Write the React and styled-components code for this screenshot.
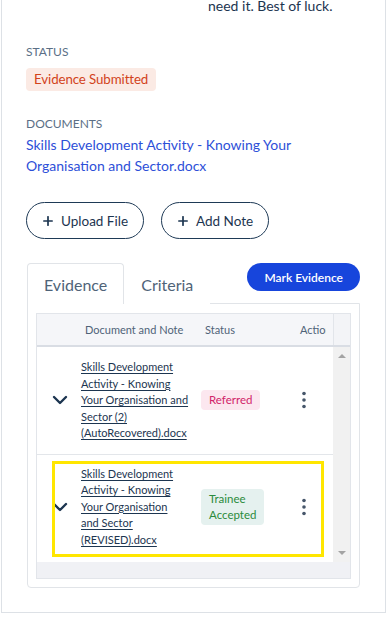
import styled, { createGlobalStyle } from "styled-components";

const GlobalStyle = createGlobalStyle`
  html, body {
    margin: 0;
    padding: 0;
    background: #ffffff;
    overflow: hidden;
  }
  body {
    font-family: Lato, "Noto Sans", sans-serif;
    color: #1c3550;
  }
`;

function Chevron() {
  return (
    <svg width="16" height="10" viewBox="0 0 16 10">
      <polyline
        points="2,2 8,8 14,2"
        fill="none"
        stroke="#1c3550"
        strokeWidth="2.4"
        strokeLinecap="round"
        strokeLinejoin="round"
      />
    </svg>
  );
}

function Plus() {
  return (
    <svg width="10" height="10" viewBox="0 0 10 10">
      <path d="M5 0.8v8.4M0.8 5h8.4" stroke="#1c3550" strokeWidth="1.7" strokeLinecap="round" />
    </svg>
  );
}

function Kebab() {
  return (
    <svg width="6" height="18" viewBox="0 0 6 18">
      <circle cx="3" cy="2.5" r="1.8" fill="#46566a" />
      <circle cx="3" cy="9" r="1.8" fill="#46566a" />
      <circle cx="3" cy="15.5" r="1.8" fill="#46566a" />
    </svg>
  );
}

const rows = [
  {
    id: 1,
    lines: ["Skills Development", "Activity - Knowing", "Your Organisation and", "Sector (2)", "(AutoRecovered).docx"],
    status: "Referred",
    tone: "referred",
  },
  {
    id: 2,
    lines: ["Skills Development", "Activity - Knowing", "Your Organisation", "and Sector", "(REVISED).docx"],
    status: "Trainee Accepted",
    tone: "accepted",
    highlight: true,
  },
];

export default function App() {
  return (
    <>
      <GlobalStyle />
      <Page>
        <Intro>need it. Best of luck.</Intro>

        <Label $gap={28}>Status</Label>
        <StatusBadge>Evidence Submitted</StatusBadge>

        <Label $gap={25}>Documents</Label>
        <DocLink>Skills Development Activity - Knowing Your Organisation and Sector.docx</DocLink>

        <Actions>
          <OutlineButton>
            <Plus />
            Upload File
          </OutlineButton>
          <OutlineButton>
            <Plus />
            Add Note
          </OutlineButton>
        </Actions>

        <TabBar>
          <Tab $active>Evidence</Tab>
          <Tab>Criteria</Tab>
          <MarkButton>Mark Evidence</MarkButton>
        </TabBar>

        <Panel>
          <Table>
            <HeadRow>
              <Clip>
                <Columns>
                  <HeadCell />
                  <HeadCell>Document and Note</HeadCell>
                  <HeadCell>Status</HeadCell>
                  <HeadCell $clip>Action</HeadCell>
                </Columns>
              </Clip>
              <Gutter />
            </HeadRow>

            <BodyRow>
              <Clip>
                {rows.map((row) => (
                  <Row key={row.id}>
                    <Columns>
                      <ExpandCell>
                        <Chevron />
                      </ExpandCell>
                      <DocCell>
                        <DocName href="#">
                          {row.lines.map((line, i) => (
                            <DocLine key={i}>{line}</DocLine>
                          ))}
                        </DocName>
                      </DocCell>
                      <StatusCell>
                        <RowBadge $tone={row.tone}>{row.status}</RowBadge>
                      </StatusCell>
                      <ActionCell>
                        <Kebab />
                      </ActionCell>
                    </Columns>
                    {row.highlight && <Highlight />}
                  </Row>
                ))}
              </Clip>
              <VScroll>
                <Arrow $up />
                <Arrow />
              </VScroll>
            </BodyRow>
            <HScroll />
          </Table>
        </Panel>
      </Page>
    </>
  );
}

const Page = styled.div`
  margin-left: 1px;
  width: 385px;
  height: 613px;
  box-sizing: border-box;
  border-left: 1px solid #dde1e6;
  border-right: 1px solid #dde1e6;
  border-bottom: 1px solid #dde1e6;
  padding: 0 25px 0 24px;
  overflow: hidden;
`;

const Intro = styled.p`
  margin: -4px 0 0;
  padding-left: 182px;
  font-size: 14px;
  line-height: 20px;
  color: #1c3550;
`;

const Label = styled.div`
  margin-top: ${(p) => p.$gap}px;
  font-size: 12px;
  line-height: 16px;
  text-transform: uppercase;
  color: #5b6f86;
`;

const StatusBadge = styled.span`
  display: inline-block;
  margin-top: 8px;
  padding: 2px 8px;
  font-size: 13.3px;
  line-height: 19px;
  letter-spacing: -0.1px;
  color: #d2431b;
  background: #fbeae4;
  border-radius: 4px;
`;

const DocLink = styled.a`
  display: block;
  margin-top: 2px;
  font-size: 14px;
  line-height: 21px;
  color: #2d4fd8;
  text-decoration: none;
  max-width: 300px;
`;

const Actions = styled.div`
  display: flex;
  gap: 17px;
  margin-top: 26px;
`;

const OutlineButton = styled.button`
  display: inline-flex;
  align-items: center;
  gap: 8px;
  height: 37px;
  padding: 0 15px 0 16px;
  border: 1.5px solid #1e3a56;
  border-radius: 20px;
  background: #ffffff;
  font-family: Lato, "Noto Sans", sans-serif;
  font-size: 13.5px;
  color: #1c3550;
`;

const TabBar = styled.div`
  display: flex;
  align-items: flex-start;
  margin-top: 24px;
  margin-left: 1px;
`;

const Tab = styled.div`
  height: 40px;
  padding: 0 16px;
  display: flex;
  align-items: center;
  font-size: 16px;
  color: #4f6378;
  border: 1px solid ${(p) => (p.$active ? "#e1e4e8" : "transparent")};
  border-bottom: none;
  border-radius: 4px 4px 0 0;
  background: #ffffff;
  margin-bottom: -1px;
  position: relative;
  z-index: 1;
`;

const MarkButton = styled.button`
  margin-left: auto;
  height: 28px;
  padding: 0 17px;
  border: none;
  border-radius: 14px;
  background: #1745dc;
  color: #ffffff;
  font-family: Lato, "Noto Sans", sans-serif;
  font-size: 12px;
  font-weight: 600;
`;

const Panel = styled.div`
  margin-left: 1px;
  border: 1px solid #e1e4e8;
  border-radius: 0 0 4px 4px;
  padding: 9px 8px 8px;
`;

const Table = styled.div`
  border: 1px solid #e2e5ea;
  display: flex;
  flex-direction: column;
`;

const HeadRow = styled.div`
  display: flex;
  height: 31px;
  background: #f5f6f9;
  border-bottom: 2px solid #d9dde4;
`;

const Clip = styled.div`
  flex: 1;
  overflow: hidden;
  min-width: 0;
`;

const Columns = styled.div`
  display: grid;
  grid-template-columns: 40px 120px 95px 70px;
  width: 325px;
  height: 100%;
`;

const HeadCell = styled.div`
  display: flex;
  align-items: center;
  padding-left: 8px;
  font-size: 11px;
  color: #4f6378;
  white-space: nowrap;
  overflow: hidden;
  ${(p) => p.$clip && "max-width: 26px;"}
`;

const Gutter = styled.div`
  width: 16px;
  border-left: 1px solid #e2e5ea;
  background: #f3f4f7;
`;

const BodyRow = styled.div`
  display: flex;
`;

const Row = styled.div`
  position: relative;
  border-bottom: 1px solid #e3e6ea;
  padding: 12px 0;
  &:last-child {
    border-bottom: none;
    padding: 11px 0 14px;
  }
`;

const ExpandCell = styled.div`
  display: flex;
  align-items: center;
  justify-content: flex-end;
  padding-right: 9px;
`;

const DocCell = styled.div`
  padding-left: 4px;
`;

const DocName = styled.a`
  display: block;
  font-size: 11px;
  line-height: 16.5px;
  color: #1c3550;
  text-decoration: underline;
  text-underline-offset: 2px;
`;

const DocLine = styled.span`
  display: block;
  white-space: nowrap;
`;

const StatusCell = styled.div`
  display: flex;
  align-items: center;
  padding-left: 4px;
`;

const tones = {
  referred: { bg: "#fce7ef", fg: "#d1246a" },
  accepted: { bg: "#e5f1ef", fg: "#2b8b3c" },
};

const RowBadge = styled.span`
  display: inline-block;
  width: min-content;
  padding: 2px 8px;
  font-size: 11.5px;
  line-height: 16px;
  border-radius: 4px;
  background: ${(p) => tones[p.$tone].bg};
  color: ${(p) => tones[p.$tone].fg};
`;

const ActionCell = styled.div`
  display: flex;
  align-items: center;
  padding-left: 9px;
`;

const Highlight = styled.div`
  position: absolute;
  left: 15px;
  top: 6px;
  right: 9px;
  bottom: 5px;
  border: 3px solid #ffe600;
  pointer-events: none;
`;

const VScroll = styled.div`
  width: 17px;
  background: #f1f1f1;
  display: flex;
  flex-direction: column;
  justify-content: space-between;
  align-items: center;
  padding: 7px 0 7px;
`;

const Arrow = styled.span`
  width: 0;
  height: 0;
  border-left: 4px solid transparent;
  border-right: 4px solid transparent;
  ${(p) =>
    p.$up ? "border-bottom: 4px solid #a3a3a3;" : "border-top: 4px solid #a3a3a3;"}
`;

const HScroll = styled.div`
  height: 16px;
  background: #f0f1f5;
`;
